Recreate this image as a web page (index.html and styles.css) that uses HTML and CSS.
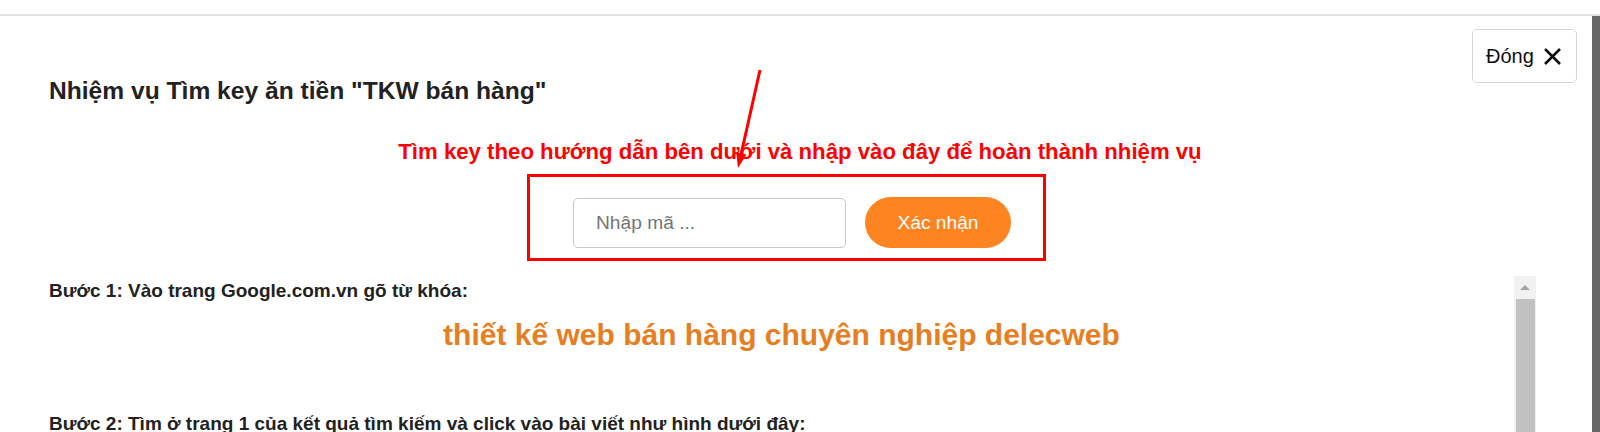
FILE: index.html
```html
<!DOCTYPE html>
<html lang="vi">
<head>
    <meta charset="UTF-8">
    <meta name="viewport" content="width=device-width, initial-scale=1.0">
    <title>Nhiệm vụ Tìm key</title>
    <link rel="stylesheet" href="styles.css">
</head>
<body>
    <div class="page">
        <div class="topbar"></div>

        <div class="modal">
            <div class="modal-body">
                <div class="modal-header">
                    <h1 class="title">Nhiệm vụ Tìm key ăn tiền "TKW bán hàng"</h1>
                    <button class="close-btn">
                        <span>Đóng</span>
                        <svg width="19" height="19" viewBox="0 0 19 19">
                            <path d="M2 2 L17 17 M17 2 L2 17" stroke="#111" stroke-width="2.6" fill="none"/>
                        </svg>
                    </button>
                </div>

                <p class="hint">Tìm key theo hướng dẫn bên dưới và nhập vào đây để hoàn thành nhiệm vụ</p>

                <div class="form-row">
                    <div class="key-box">
                        <input type="text" class="key-input" placeholder="Nhập mã ...">
                        <button class="confirm-btn">Xác nhận</button>
                    </div>
                </div>

                <div class="scroll-area">
                    <div class="steps">
                        <p class="step">Bước 1: Vào trang Google.com.vn gõ từ khóa:</p>
                        <p class="keyword">thiết kế web bán hàng chuyên nghiệp delecweb</p>
                        <p class="step step-2">Bước 2: Tìm ở trang 1 của kết quả tìm kiếm và click vào bài viết như hình dưới đây:</p>
                    </div>
                    <div class="scrollbar">
                        <div class="scroll-up"></div>
                        <div class="scroll-thumb"></div>
                    </div>
                </div>
            </div>
            <div class="edge"></div>
        </div>

        <!-- red arrow annotation -->
        <svg class="arrow" width="50" height="120" viewBox="0 0 50 120">
            <line x1="35" y1="10" x2="16.3" y2="93.4" stroke="#ff0000" stroke-width="3"/>
            <polygon points="13,108 21.4,94.6 11.2,92.2" fill="#ff0000"/>
        </svg>
    </div>
</body>
</html>
```

FILE: styles.css
```css
* {
    margin: 0;
    padding: 0;
    box-sizing: border-box;
}

body {
    font-family: "Liberation Sans", Arial, sans-serif;
    background: #fff;
    color: #222;
}

.page {
    position: relative;
    height: 432px;
    overflow: hidden;
}

.topbar {
    height: 16px;
    border-bottom: 2px solid #e3e3e3;
}

.modal {
    display: flex;
    height: 416px;
}

.modal-body {
    flex: 1;
}

.edge {
    width: 8px;
    background: #666;
}

.modal-header {
    display: flex;
    justify-content: space-between;
    align-items: flex-start;
    padding: 13px 15px 0 49px;
}

.title {
    margin-top: 48px;
    font-size: 24.6px;
    line-height: 28px;
    font-weight: 700;
    color: #222;
}

.close-btn {
    display: flex;
    align-items: center;
    gap: 9px;
    width: 105px;
    height: 54px;
    padding: 0 13px;
    background: #fff;
    border: 1px solid #d6d6d6;
    border-radius: 5px;
    font-family: inherit;
    font-size: 20px;
    color: #111;
    cursor: pointer;
}

.hint {
    margin-top: 34px;
    padding-left: 8px;
    text-align: center;
    color: #ff0000;
    font-weight: 700;
    font-size: 22.2px;
    line-height: 26px;
}

.form-row {
    display: flex;
    justify-content: center;
    margin-top: 9px;
    padding-right: 19px;
}

.key-box {
    display: flex;
    align-items: center;
    gap: 19px;
    border: 3px solid #ff0000;
    padding: 20px 32px 10px 43px;
}

.key-input {
    width: 273px;
    height: 50px;
    padding: 0 22px;
    border: 1px solid #c8c8c8;
    border-radius: 5px;
    font-family: inherit;
    font-size: 19.2px;
    color: #333;
    outline: none;
}

.key-input::placeholder {
    color: #757575;
}

.confirm-btn {
    width: 146px;
    height: 51px;
    border: none;
    border-radius: 26px;
    background: #fd8420;
    color: #fff;
    font-family: inherit;
    font-size: 19.2px;
    cursor: pointer;
}

.scroll-area {
    display: flex;
    margin: 15px 56px 0 49px;
    height: 170px;
}

.steps {
    flex: 1;
    overflow: hidden;
}

.step {
    margin-top: 4px;
    font-size: 19px;
    line-height: 22px;
    font-weight: 700;
    color: #222;
}

.step-2 {
    margin-top: 61px;
}

.keyword {
    margin-top: 16px;
    text-align: center;
    font-size: 30px;
    line-height: 34px;
    font-weight: 700;
    color: #e67e22;
}

.scrollbar {
    width: 22px;
    background: #f1f1f1;
    display: flex;
    flex-direction: column;
}

.scroll-up {
    height: 23px;
    display: flex;
    justify-content: center;
    align-items: center;
}

.scroll-up::before {
    content: "";
    border-left: 5px solid transparent;
    border-right: 5px solid transparent;
    border-bottom: 5px solid #a3a3a3;
}

.scroll-thumb {
    flex: 1;
    margin: 0 1px 0 2px;
    background: #c1c1c1;
}

.arrow {
    position: absolute;
    left: 725px;
    top: 60px;
}
```
